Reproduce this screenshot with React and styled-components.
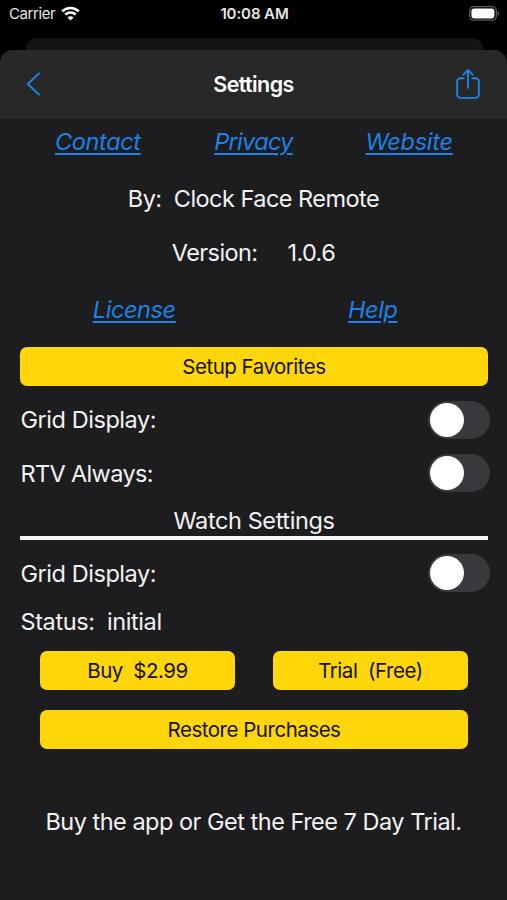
import React, { useState } from "react";
import styled, { createGlobalStyle } from "styled-components";

const App = () => {
  const [grid, setGrid] = useState(false);
  const [rtv, setRtv] = useState(false);
  const [watchGrid, setWatchGrid] = useState(false);

  return (
    <>
      <GlobalStyle />
      <Phone>
        <StatusBar>
          <Carrier>
            <span>Carrier</span>
            <WifiIcon />
          </Carrier>
          <Clock>10:08 AM</Clock>
          <BatteryIcon />
        </StatusBar>
        <BackSheet />
        <Sheet>
          <Header>
            <IconButton aria-label="Back">
              <BackIcon />
            </IconButton>
            <Title>Settings</Title>
            <IconButton $end aria-label="Share">
              <ShareIcon />
            </IconButton>
          </Header>
          <Links $height={44} $inset={20}>
            <Link $spacing={-0.35}>Contact</Link>
            <Link $spacing={-0.7}>Privacy</Link>
            <Link $spacing={-0.25}>Website</Link>
          </Links>
          <Line $height={70} $spacing={-0.53}>
            By:{"  "}Clock Face Remote
          </Line>
          <Line $height={39} $gap={30} $spacing={-0.6}>
            <span>Version:</span>
            <span>1.0.6</span>
          </Line>
          <Links $height={75} $inset={15}>
            <Link $spacing={-0.4}>License</Link>
            <Link $spacing={-0.4}>Help</Link>
          </Links>
          <Favorites>
            <Button $spacing={-0.5}>Setup Favorites</Button>
          </Favorites>
          <SettingRow $height={67}>
            <Label $spacing={-0.45}>Grid Display:</Label>
            <Toggle aria-label="Grid Display" onClick={() => setGrid(!grid)}>
              <Knob $on={grid} />
            </Toggle>
          </SettingRow>
          <SettingRow $height={40}>
            <Label $spacing={-0.65}>RTV Always:</Label>
            <Toggle aria-label="RTV Always" onClick={() => setRtv(!rtv)}>
              <Knob $on={rtv} />
            </Toggle>
          </SettingRow>
          <Section>Watch Settings</Section>
          <SettingRow $height={66}>
            <Label $spacing={-0.45}>Grid Display:</Label>
            <Toggle
              aria-label="Watch Grid Display"
              onClick={() => setWatchGrid(!watchGrid)}
            >
              <Knob $on={watchGrid} />
            </Toggle>
          </SettingRow>
          <SettingRow $height={31}>
            <Label $spacing={-0.4}>Status:{"  "}initial</Label>
          </SettingRow>
          <Purchases>
            <Button $spacing={-0.5}>Buy{"  "}$2.99</Button>
            <Button $spacing={-0.46}>Trial{"  "}(Free)</Button>
            <Button $wide $spacing={-0.48}>
              Restore Purchases
            </Button>
          </Purchases>
          <Line $height={145} $spacing={-0.5}>
            Buy the app or Get the Free 7 Day Trial.
          </Line>
        </Sheet>
      </Phone>
    </>
  );
};

//Icons
const WifiIcon = () => (
  <svg width="19" height="15" viewBox="0 0 19 15" fill="none">
    <path d="M1.2 5.4a11.8 11.8 0 0 1 16.6 0" stroke="#fff" strokeWidth="2.7" />
    <path d="M4.3 8.6a7.4 7.4 0 0 1 10.4 0" stroke="#fff" strokeWidth="2.5" />
    <path d="M9.5 14.5l-3-3.1a4.2 4.2 0 0 1 6 0z" fill="#fff" />
  </svg>
);

const BatteryIcon = () => (
  <svg width="31" height="15" viewBox="0 0 31 15" fill="none">
    <rect x="0.7" y="0.7" width="26.6" height="13.4" rx="4" stroke="#5c5c5c" strokeWidth="1.3" />
    <rect x="2.4" y="2.4" width="23" height="10" rx="2.4" fill="#fff" />
    <path d="M28.6 5v4.8c1-.4 1.6-1.3 1.6-2.4s-.6-2-1.6-2.4z" fill="#5c5c5c" />
  </svg>
);

const BackIcon = () => (
  <svg width="15" height="24" viewBox="0 0 15 24" fill="none">
    <path d="M13 1.5L1.8 12 13 22.5" stroke="#1c82e8" strokeWidth="2" strokeLinecap="round" strokeLinejoin="round" />
  </svg>
);

const ShareIcon = () => (
  <svg
    width="26"
    height="32"
    viewBox="0 0 26 32"
    fill="none"
    stroke="#1c82e8"
    strokeWidth="1.9"
    strokeLinecap="round"
    strokeLinejoin="round"
  >
    <path d="M8.5 10.3H5.4A3.3 3.3 0 0 0 2.1 13.6v13A3.3 3.3 0 0 0 5.4 29.9h15.2a3.3 3.3 0 0 0 3.3-3.3v-13a3.3 3.3 0 0 0-3.3-3.3H17.5" />
    <path d="M13 19.7V2.2M8.4 6.6L13 2l4.6 4.6" />
  </svg>
);

const GlobalStyle = createGlobalStyle`
  * {
    box-sizing: border-box;
  }
  body {
    margin: 0;
    background: #000;
    color: #f2f2f2;
    font-family: Inter, "Liberation Sans", sans-serif;
  }
  button {
    border: none;
    padding: 0;
    background: none;
    font-family: inherit;
    cursor: pointer;
  }
  svg {
    display: block;
  }
`;

const Phone = styled.div`
  display: flex;
  flex-direction: column;
  width: 507px;
  height: 900px;
  overflow: hidden;
`;

const StatusBar = styled.div`
  display: grid;
  grid-template-columns: 1fr auto 1fr;
  align-items: center;
  height: 38px;
  padding: 0 7px 11px 9px;
  font-size: 15px;
  color: #e6e6e6;
  > svg {
    justify-self: end;
  }
`;

const Carrier = styled.div`
  display: flex;
  align-items: center;
  gap: 6px;
  letter-spacing: -0.4px;
`;

const Clock = styled.div`
  font-weight: 600;
  letter-spacing: -0.1px;
`;

const BackSheet = styled.div`
  height: 26px;
  margin: 0 24px -14px 26px;
  flex-shrink: 0;
  border-radius: 10px 10px 0 0;
  background: #141414;
`;

const Sheet = styled.div`
  position: relative;
  flex: 1;
  border-radius: 13px 13px 0 0;
  background: #1d1d1f;
  overflow: hidden;
`;

const Header = styled.div`
  display: grid;
  grid-template-columns: 1fr auto 1fr;
  align-items: center;
  height: 69px;
  padding: 0 26px 2px;
  background: #282828;
`;

const Title = styled.h1`
  margin: 0;
  font-size: 21.5px;
  font-weight: 600;
  letter-spacing: -0.6px;
  color: #fff;
`;

const IconButton = styled.button`
  display: flex;
  justify-self: ${(p) => (p.$end ? "end" : "start")};
`;

const Links = styled.div`
  display: grid;
  grid-auto-flow: column;
  grid-auto-columns: 1fr;
  place-items: center;
  height: ${(p) => p.$height}px;
  padding: 0 ${(p) => p.$inset}px;
`;

const Link = styled.a`
  font-size: 23.5px;
  font-style: italic;
  letter-spacing: ${(p) => p.$spacing}px;
  color: #1c82e8;
  text-decoration: underline;
  text-decoration-thickness: 1.6px;
  text-underline-offset: 3px;
  cursor: pointer;
`;

const Line = styled.div`
  display: flex;
  align-items: center;
  justify-content: center;
  gap: ${(p) => p.$gap || 0}px;
  height: ${(p) => p.$height}px;
  font-size: 23.5px;
  letter-spacing: ${(p) => p.$spacing}px;
  white-space: pre;
`;

const Favorites = styled.div`
  display: grid;
  padding: 0 19px 0 20px;
`;

const Button = styled.button`
  grid-column: ${(p) => (p.$wide ? "1 / -1" : "auto")};
  height: 39px;
  border-radius: 7px;
  background: #ffd60a;
  color: #14120a;
  font-size: 20.5px;
  letter-spacing: ${(p) => p.$spacing}px;
  white-space: pre;
`;

const SettingRow = styled.div`
  display: flex;
  align-items: center;
  justify-content: space-between;
  height: ${(p) => p.$height}px;
  padding: 0 17px 0 20.5px;
`;

const Label = styled.span`
  font-size: 23.5px;
  letter-spacing: ${(p) => p.$spacing}px;
  white-space: pre;
`;

const Toggle = styled.button`
  width: 62px;
  height: 38px;
  padding: 2px;
  border-radius: 19px;
  background: #39393d;
`;

const Knob = styled.span`
  display: block;
  width: 34px;
  height: 34px;
  border-radius: 50%;
  background: #fff;
  transform: translateX(${(p) => (p.$on ? 24 : 0)}px);
`;

const Section = styled.h2`
  height: 47px;
  margin: 0 19px 0 20px;
  padding-top: 14px;
  border-bottom: 4px solid #f5f5f5;
  font-size: 23.5px;
  font-weight: 400;
  line-height: 28px;
  letter-spacing: -0.4px;
  text-align: center;
`;

const Purchases = styled.div`
  display: grid;
  grid-template-columns: 1fr 1fr;
  gap: 20px 38px;
  padding: 14px 39px 0 40px;
`;

export default App;
